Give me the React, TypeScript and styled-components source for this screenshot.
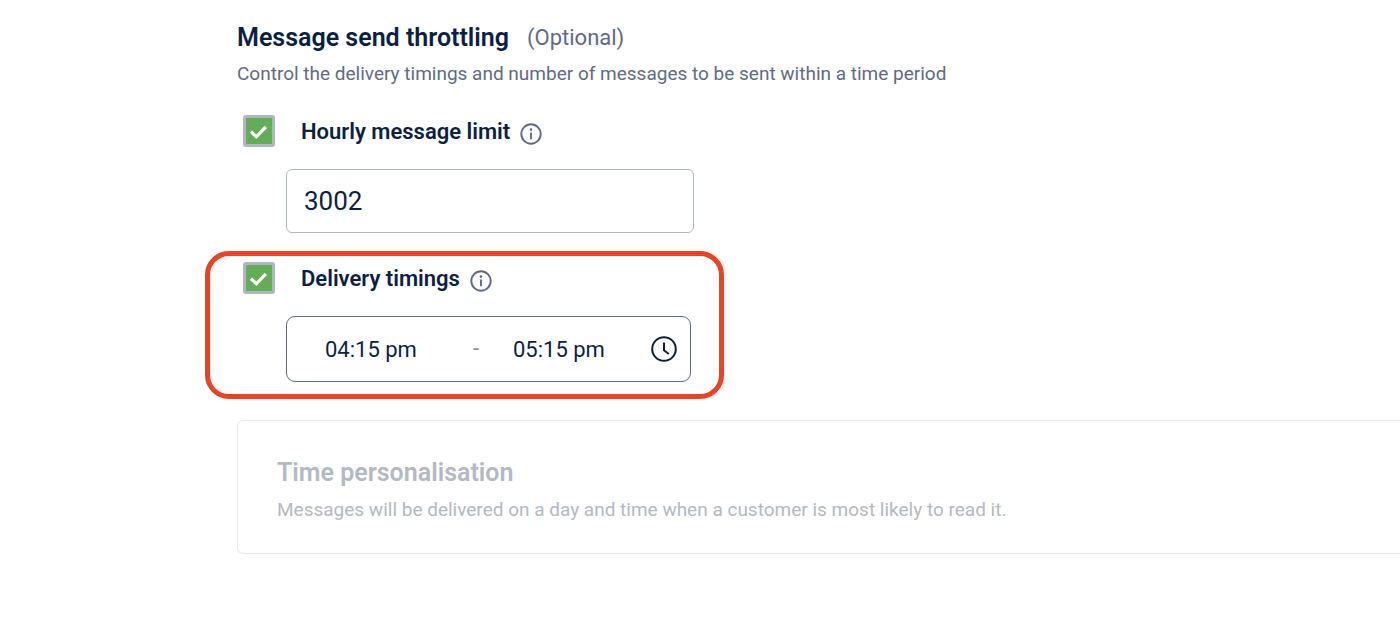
import React, { useState } from "react";
import styled, { createGlobalStyle } from "styled-components";

const navy = "#0b1f44";
const slate = "#5f6b85";
const muted = "#b3b9c4";

const GlobalStyle = createGlobalStyle`
  *, *::before, *::after { box-sizing: border-box; }
  body {
    margin: 0;
    background: #ffffff;
    color: ${navy};
    font-family: Roboto, "Liberation Sans", sans-serif;
  }
`;

const Page = styled.main`
  padding: 22px 0 64px 237px;
`;

const Heading = styled.h2<{ $muted?: boolean }>`
  margin: 0;
  font-size: 25px;
  font-weight: 600;
  line-height: 32px;
  color: ${(p) => (p.$muted ? muted : navy)};
`;

const HeadingRow = styled.header`
  display: flex;
  align-items: center;
  gap: 18px;
`;

const Optional = styled.span`
  font-size: 22px;
  line-height: 32px;
  color: ${slate};
`;

const Description = styled.p<{ $muted?: boolean }>`
  margin: 0;
  padding-top: ${(p) => (p.$muted ? 9 : 8)}px;
  font-size: 19px;
  line-height: 24px;
  color: ${(p) => (p.$muted ? muted : slate)};
`;

const Setting = styled.section`
  padding: 29px 0 18px 6px;
`;

const Highlight = styled.section`
  max-width: 519px;
  margin-left: -32px;
  padding: 6px 28px 12px 33px;
  border: 5px solid #ee4023;
  border-radius: 24px;
`;

const OptionRow = styled.div`
  display: flex;
  align-items: center;
  height: 32px;
`;

const CheckWrap = styled.span`
  display: grid;
  margin-right: 26px;
  > * { grid-area: 1 / 1; }
  svg { pointer-events: none; }
`;

const CheckInput = styled.input`
  appearance: none;
  width: 32px;
  height: 32px;
  margin: 0;
  border: 3px solid #b0b7c3;
  border-radius: 3px;
  background: #ffffff;
  cursor: pointer;
  &:checked { background: #62ad55; }
`;

const OptionLabel = styled.label`
  padding-top: 2px;
  font-size: 22px;
  font-weight: 600;
  line-height: 32px;
`;

const InfoButton = styled.button`
  display: flex;
  margin: 6px 0 0 10px;
  padding: 0;
  border: 0;
  background: none;
  color: ${slate};
`;

const LimitInput = styled.input`
  display: block;
  width: 408px;
  height: 64px;
  margin: 22px 0 0 43px;
  padding: 0 17px;
  border: 1px solid #b0b7c3;
  border-radius: 6px;
  background: #ffffff;
  color: ${navy};
  font: 400 26px Roboto, "Liberation Sans", sans-serif;
`;

const TimeRange = styled.div`
  display: flex;
  align-items: center;
  height: 66px;
  margin: 22px 0 0 43px;
  padding: 0 13px 0 38px;
  border: 1px solid ${slate};
  border-radius: 9px;
`;

const TimeInput = styled.input`
  flex: 1 1 0;
  min-width: 0;
  height: 40px;
  padding: 0;
  border: 0;
  background: none;
  color: ${navy};
  font: 400 22px Roboto, "Liberation Sans", sans-serif;
`;

const Dash = styled.span`
  width: 50px;
  padding-left: 10px;
  font-size: 22px;
  line-height: 32px;
  color: #8a8a8a;
`;

const ClockButton = styled.button`
  display: flex;
  padding: 0;
  border: 0;
  background: none;
  color: ${navy};
`;

const Card = styled.section`
  margin-top: 21px;
  padding: 36px 39px 31px;
  border: 1px solid #e8e9eb;
  border-right: 0;
  border-radius: 6px 0 0 6px;
`;

const InfoIcon = () => (
  <svg width="22" height="22" viewBox="0 0 22 22" fill="none" aria-hidden="true">
    <circle cx="11" cy="11" r="9.7" stroke="currentColor" strokeWidth="1.9" />
    <circle cx="11" cy="6.6" r="1.3" fill="currentColor" />
    <path d="M11 9.6v6.6" stroke="currentColor" strokeWidth="1.9" />
  </svg>
);

const ClockIcon = () => (
  <svg width="26" height="26" viewBox="0 0 26 26" fill="none" aria-hidden="true">
    <circle cx="13" cy="13" r="11.8" stroke="currentColor" strokeWidth="2" />
    <path d="M13 6.6v7.6l4.8 3.8" stroke="currentColor" strokeWidth="2" />
  </svg>
);

type OptionProps = { id: string; label: string };

const Option = ({ id, label }: OptionProps) => {
  const [checked, setChecked] = useState(true);
  return (
    <OptionRow>
      <CheckWrap>
        <CheckInput
          id={id}
          type="checkbox"
          checked={checked}
          onChange={(e) => setChecked(e.target.checked)}
        />
        {checked && (
          <svg width="32" height="32" viewBox="0 0 32 32" fill="none" aria-hidden="true">
            <path d="M8 16.6l5.4 5.2 9.4-10" stroke="#ffffff" strokeWidth="3.2" />
          </svg>
        )}
      </CheckWrap>
      <OptionLabel htmlFor={id}>{label}</OptionLabel>
      <InfoButton type="button" aria-label={`About ${label}`}>
        <InfoIcon />
      </InfoButton>
    </OptionRow>
  );
};

export default function App() {
  return (
    <>
      <GlobalStyle />
      <Page>
        <HeadingRow>
          <Heading>Message send throttling</Heading>
          <Optional>(Optional)</Optional>
        </HeadingRow>
        <Description>
          Control the delivery timings and number of messages to be sent within a time period
        </Description>
        <Setting>
          <Option id="hourly-limit" label="Hourly message limit" />
          <LimitInput aria-label="Hourly message limit" inputMode="numeric" defaultValue="3002" />
        </Setting>
        <Highlight>
          <Option id="delivery-timings" label="Delivery timings" />
          <TimeRange>
            <TimeInput aria-label="Start time" defaultValue="04:15 pm" />
            <Dash>-</Dash>
            <TimeInput aria-label="End time" defaultValue="05:15 pm" />
            <ClockButton type="button" aria-label="Choose time">
              <ClockIcon />
            </ClockButton>
          </TimeRange>
        </Highlight>
        <Card>
          <Heading $muted>Time personalisation</Heading>
          <Description $muted>
            Messages will be delivered on a day and time when a customer is most likely to read it.
          </Description>
        </Card>
      </Page>
    </>
  );
}
